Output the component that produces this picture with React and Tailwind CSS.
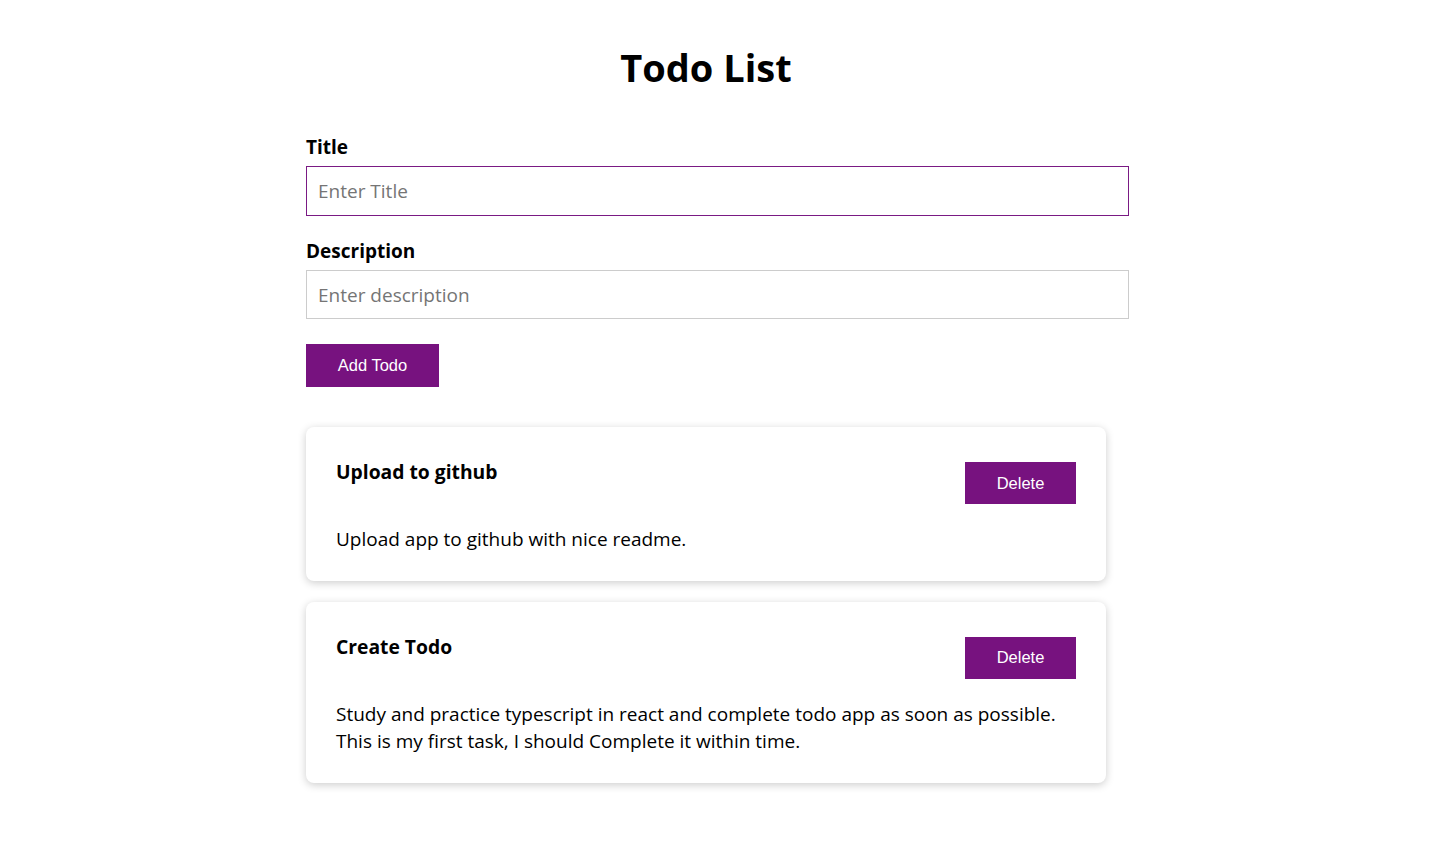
import React from "react";

const todos = [
  { title: "Upload to github", desc: "Upload app to github with nice readme." },
  {
    title: "Create Todo",
    desc: "Study and practice typescript in react and complete todo app as soon as possible. This is my first task, I should Complete it within time.",
  },
];

export default function App() {
  return (
    <div className="min-h-screen bg-white text-black" style={{ fontFamily: '"Open Sans", "Noto Sans", sans-serif' }}>
      <div className="mx-auto w-[825px] pt-[37px]">
        <h1 className="w-[800px] text-center text-[38px] font-bold leading-[60px]">Todo List</h1>
        <form className="mt-[37px]" onSubmit={(e) => e.preventDefault()}>
          <label className="block text-[19px] font-bold leading-[27px]">Title</label>
          <input
            className="mt-[5px] block h-[50px] w-[823px] border border-[#7a1a84] px-[11px] text-[19px] outline-none placeholder:text-[#757575]"
            placeholder="Enter Title"
          />
          <label className="mt-[22px] block text-[19px] font-bold leading-[27px]">Description</label>
          <input
            className="mt-[5px] block h-[49px] w-[823px] border border-[#cccccc] px-[11px] text-[19px] outline-none placeholder:text-[#757575]"
            placeholder="Enter description"
          />
          <button
            type="submit"
            className="mt-[25px] h-[43px] w-[133px] bg-[#77127f] text-[16.5px] text-white"
            style={{ fontFamily: '"Liberation Sans", Arial, sans-serif' }}
          >
            Add Todo
          </button>
        </form>
        <div className="mt-[40px] flex w-[800px] flex-col gap-[21px] pb-10">
          {todos.map((t) => (
            <div
              key={t.title}
              className="rounded-[8px] bg-white pt-[31px] pr-[30px] pb-[27px] pl-[30px] shadow-[0_2px_8px_rgba(0,0,0,0.2)]"
            >
              <div className="flex items-start justify-between">
                <h3 className="text-[19.3px] font-bold leading-[27px]">{t.title}</h3>
                <button
                  className="mt-[4px] h-[42px] w-[111px] shrink-0 bg-[#77127f] text-[16.5px] text-white"
                  style={{ fontFamily: '"Liberation Sans", Arial, sans-serif' }}
                >
                  Delete
                </button>
              </div>
              <p className="mt-[22px] text-[19px] leading-[27.5px]">{t.desc}</p>
            </div>
          ))}
        </div>
      </div>
    </div>
  );
}
